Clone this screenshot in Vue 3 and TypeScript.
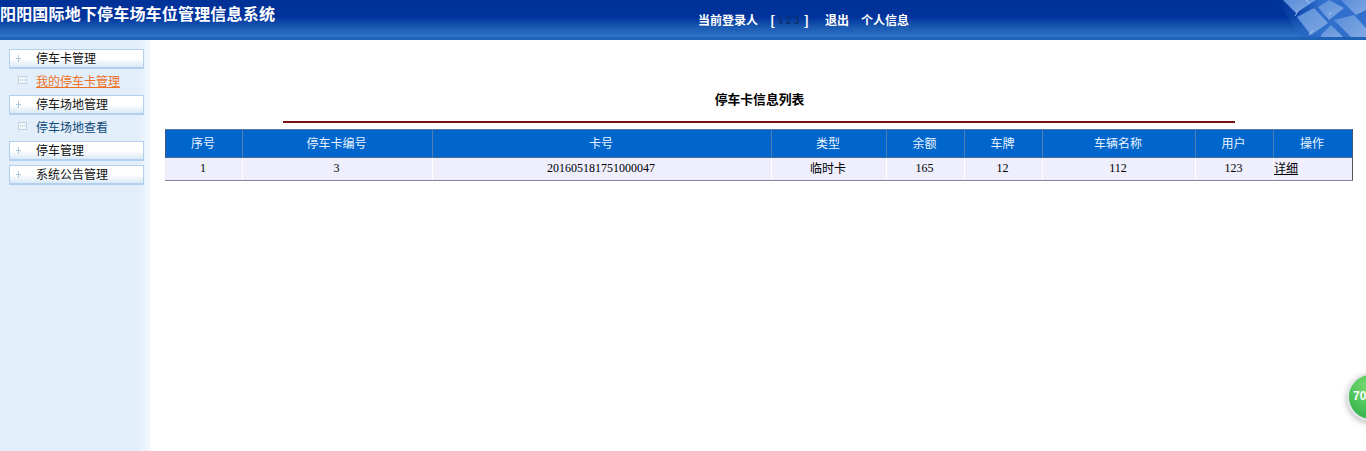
<script setup lang="ts">
interface MenuItem { label: string; kind: 'group' | 'link'; active?: boolean }
const menu: MenuItem[] = [
  { label: '停车卡管理', kind: 'group' },
  { label: '我的停车卡管理', kind: 'link', active: true },
  { label: '停车场地管理', kind: 'group' },
  { label: '停车场地查看', kind: 'link' },
  { label: '停车管理', kind: 'group' },
  { label: '系统公告管理', kind: 'group' },
]
const cols = [77, 190, 339, 115, 78, 78, 153, 78, 79]
const heads = ['序号', '停车卡编号', '卡号', '类型', '余额', '车牌', '车辆名称', '用户', '操作']
const row = ['1', '3', '201605181751000047', '临时卡', '165', '12', '112', '123']
</script>

<template>
  <div class="page">
    <header class="top">
      <h1 class="brand">阳阳国际地下停车场车位管理信息系统</h1>
      <nav class="usernav">
        <span>当前登录人</span>
        <span class="who">[<i>123</i>]</span>
        <a>退出</a>
        <a>个人信息</a>
      </nav>
      <svg class="keys" width="140" height="37" viewBox="0 0 140 37" aria-hidden="true">
        <defs>
          <linearGradient id="keyfill" x1="0" y1="0" x2="1" y2="1">
            <stop offset="0" stop-color="#5a8ed8" />
            <stop offset="1" stop-color="#80a8e4" />
          </linearGradient>
          <linearGradient id="keyback" x1="0" y1="0" x2="1" y2="0">
            <stop offset="0" stop-color="#1a58ba" stop-opacity="0" />
            <stop offset=".5" stop-color="#3070cc" />
            <stop offset="1" stop-color="#3070cc" />
          </linearGradient>
          <filter id="soft"><feGaussianBlur stdDeviation="0.6" /></filter>
        </defs>
        <path d="M50 0H140V37H75z" fill="url(#keyback)" />
        <g fill="url(#keyfill)" filter="url(#soft)">
          <path d="M57 0H90L70 13z" />
          <path d="M103 0 118 8 103 20 92 7z" />
          <path d="M71 17 88 8 102 23 85 35z" />
          <path d="M115 0H140V10L130 15z" />
          <path d="M108 20 128 15 140 28V37H125z" />
          <path d="M95 35 105 25 117 37H95z" />
        </g>
        <path d="M83 35 87 30M69 16 72 11M103 15 105 12M80 0 83 3" stroke="#cfe0f6" stroke-width="1" opacity=".7" />
      </svg>
    </header>
    <div class="body">
      <aside class="side">
        <template v-for="m in menu" :key="m.label">
          <div v-if="m.kind === 'group'" class="group">
            <svg class="dot" width="7" height="7" viewBox="0 0 7 7"><path d="M3.5 0v7M1 3.5h5" stroke="#a9c8e0" stroke-width="1" /></svg>
            <span>{{ m.label }}</span>
          </div>
          <div v-else class="link" :class="{ active: m.active }">
            <svg class="box" width="9" height="8" viewBox="0 0 9 8">
              <rect x=".5" y=".5" width="8" height="7" fill="#f2f7fb" stroke="#c3d3e0" />
              <path d="M2 4h5" stroke="#9fb5c8" stroke-dasharray="1 1" />
            </svg>
            <span class="txt">{{ m.label }}</span>
          </div>
        </template>
      </aside>
      <main class="main">
        <h2 class="title">停车卡信息列表</h2>
        <div class="rule"></div>
        <table class="grid">
          <colgroup><col v-for="(w, i) in cols" :key="i" :style="{ width: w + 'px' }" /></colgroup>
          <thead><tr><th v-for="h in heads" :key="h">{{ h }}</th></tr></thead>
          <tbody>
            <tr>
              <td v-for="(c, i) in row" :key="i">{{ c }}</td>
              <td class="op"><a>详细</a></td>
            </tr>
          </tbody>
        </table>
      </main>
    </div>
    <div class="ball"><span>70</span></div>
  </div>
</template>

<style>
html, body { margin: 0; background: #fff; overflow: hidden; }
</style>

<style scoped>
.page { width: 1366px; height: 451px; position: relative; overflow: hidden; font-family: "Liberation Serif", "Noto Sans CJK SC", serif; font-size: 12px; color: #000; }
.top { height: 40px; box-sizing: border-box; border-bottom: 3px solid #1f63b6; background: linear-gradient(#003197 0, #00339c 17px, #1c5cb4 28px, #2f74c8 37px); display: flex; position: relative; }
.brand { margin: 3px 0 0; width: 698px; flex: none; font: bold 16px/20px "Noto Sans CJK SC", sans-serif; letter-spacing: .18px; color: #fff; white-space: nowrap; }
.usernav { display: flex; margin-top: 11px; height: 18px; color: #fff; font: bold 12px/18px "Noto Sans CJK SC", sans-serif; }
.usernav .who { margin-left: 12px; font-size: 14px; width: 39px; display: flex; justify-content: space-between; }
.usernav .who i { font: bold 12px/18px "Liberation Serif", serif; letter-spacing: 2px; color: #0a3272; }
.usernav a:first-of-type { margin-left: 16px; }
.usernav a + a { margin-left: 12px; }
.keys { position: absolute; right: 0; top: 0; }
.body { display: flex; height: 411px; }
.side { width: 151px; flex: none; box-sizing: border-box; padding: 9px 7px 0 9px; background: linear-gradient(90deg, #e2eefa 0, #e2eefa 138px, #f6f9fe 151px); }
.group { height: 20px; box-sizing: border-box; margin-bottom: 4px; border: 1px solid #b3d0ec; border-bottom-width: 2px; background: linear-gradient(#fff 0, #fff 50%, #dbe9f5 100%); display: flex; align-items: center; color: #111; font-family: "Noto Sans CJK SC", sans-serif; line-height: 16px; }
.dot { margin: 0 14px 0 5px; flex: none; }
.group span { position: relative; top: -1px; }
.link { height: 20px; margin: -3px 0 5px; display: flex; align-items: center; color: #0e4a78; font-family: "Noto Sans CJK SC", sans-serif; }
.link.active { color: #f0701e; }
.link.active .txt { text-decoration: underline; }
.box { margin: 0 9px 0 9px; flex: none; }
.main { flex: 1; padding: 0 13px 0 14px; min-width: 0; }
.title { margin: 50px 0 0; font: bold 12.8px/18px "Noto Sans CJK SC", sans-serif; text-align: center; padding-left: 1px; }
.rule { height: 2px; margin: 13px 118px 6px; background: #7a1212; }
.grid { width: 1187px; table-layout: fixed; border-collapse: collapse; font-family: "Liberation Serif", "Noto Sans CJK SC", serif; }
.grid th { height: 28px; padding: 0 2px 2px 0; box-sizing: border-box; background: #0066cc; color: #eaf4ff; font: 400 12px "Noto Sans CJK SC", sans-serif; border: 1px solid #4f7fb4; border-top-color: #5c7b9e; border-bottom-color: #45709c; }
.grid th:first-child { border-left-color: #3a5a80; }
.grid th:last-child { border-right-color: #3a5a80; }
.grid td { height: 23px; padding: 0 2px 2px 0; box-sizing: border-box; background: #eeeefc; text-align: center; border-left: 1px solid #fff; border-right: 1px solid #fff; border-bottom: 1px solid #85859a; }
.grid td:first-child { border-left-color: #eeeefc; }
.grid td:last-child { border-right: 1px solid #555; }
.grid td.op { text-align: left; font-family: "Noto Sans CJK SC", sans-serif; padding-bottom: 3px; }
.op a { color: #000; text-decoration: underline; }
.ball { position: absolute; left: 1347px; top: 373px; width: 48px; height: 48px; box-sizing: border-box; border-radius: 50%; border: 2px solid #e0e5e8; background: radial-gradient(circle at 50% 25%, #7ede74, #3fbb52 70%, #35a94a); box-shadow: 0 2px 6px rgba(0,0,0,.3); color: #fff; font: bold 12px/42px "Liberation Sans", sans-serif; padding-left: 4px; }
</style>
